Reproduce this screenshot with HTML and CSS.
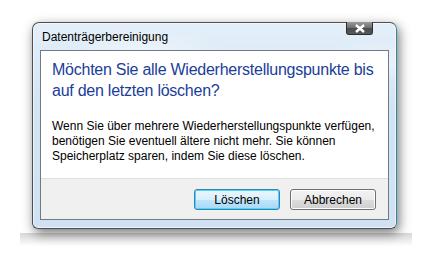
FILE: index.html
```html
<!DOCTYPE html>
<html lang="de">

<head>
    <meta charset="UTF-8">
    <link rel="stylesheet" href="styles.css">
    <title>Datenträgerbereinigung</title>
</head>

<body>
    <div class="stage">
        <div class="window">
            <div class="titlebar">
                <span class="title">Datenträgerbereinigung</span>
                <div class="close-btn">
                    <svg width="12" height="9" viewBox="0 0 12 9">
                        <path d="M2 1 L10 8 M10 1 L2 8" stroke="#ffffff" stroke-width="2.4" />
                    </svg>
                </div>
            </div>
            <div class="panel">
                <div class="content">
                    <div class="instruction">Möchten Sie alle Wiederherstellungspunkte bis auf den letzten löschen?</div>
                    <p class="message">Wenn Sie über mehrere Wiederherstellungspunkte verfügen, benötigen Sie eventuell ältere nicht mehr. Sie können Speicherplatz sparen, indem Sie diese löschen.</p>
                </div>
                <div class="footer">
                    <button class="btn btn-default">Löschen</button>
                    <button class="btn">Abbrechen</button>
                </div>
            </div>
        </div>
        <div class="floor"></div>
    </div>
</body>

</html>
```

FILE: styles.css
```css
* {
    margin: 0;
    padding: 0;
    box-sizing: border-box;
}

body {
    font-family: 'Liberation Sans', Arial, sans-serif;
    background-color: #ffffff;
    color: #000000;
    width: 433px;
    height: 253px;
    overflow: hidden;
}

.stage {
    padding: 22px 0 0 32px;
}

/* Window frame */
.window {
    position: relative;
    width: 365px;
    height: 207px;
    border: 1px solid #4a4f55;
    border-right-color: #2a8aa0;
    border-radius: 7px 7px 6px 6px;
    background:
        radial-gradient(ellipse 120px 40px at 110px 34px, rgba(255, 255, 255, 0.55), rgba(255, 255, 255, 0) 70%),
        radial-gradient(ellipse 90px 30px at 340px 40px, rgba(255, 255, 255, 0.5), rgba(255, 255, 255, 0) 70%),
        linear-gradient(180deg, #e4eff9 0%, #d3e4f4 40%, #cfe1f3 100%);
    box-shadow: 0 0 0 1px rgba(255, 255, 255, 0.6) inset, 2px 4px 12px rgba(0, 0, 0, 0.55);
    z-index: 1;
}

.titlebar {
    height: 27px;
    padding: 4px 0 0 9px;
}

.title {
    font-size: 12px;
    color: #000000;
}

.close-btn {
    position: absolute;
    top: -1px;
    right: 23px;
    width: 27px;
    height: 13px;
    border: 1px solid #2e2e2e;
    border-top: none;
    border-radius: 0 0 3px 3px;
    background: linear-gradient(180deg, #9a9a9a 0%, #6c6c6c 50%, #4a4a4a 51%, #5a5a5a 100%);
    display: flex;
    align-items: center;
    justify-content: center;
}

/* Inner panel */
.panel {
    margin: 0 7px;
    height: 170px;
    border: 1px solid #6f7a85;
    display: flex;
    flex-direction: column;
}

.content {
    flex: 1;
    background-color: #ffffff;
    padding: 8px 4px 0 11px;
}

.instruction {
    font-size: 16px;
    line-height: 21px;
    letter-spacing: -0.25px;
    color: #1b3d9a;
}

.message {
    font-size: 12px;
    line-height: 15px;
    margin-top: 18px;
}

.footer {
    height: 41px;
    background-color: #f0f0f0;
    border-top: 1px solid #dfdfdf;
    display: flex;
    justify-content: flex-end;
    align-items: flex-start;
    gap: 10px;
    padding: 10px 12px 0 0;
}

.btn {
    width: 86px;
    height: 21px;
    font-family: 'Liberation Sans', Arial, sans-serif;
    font-size: 12px;
    color: #000000;
    border: 1px solid #707070;
    border-radius: 3px;
    background: linear-gradient(180deg, #f2f2f2 0%, #ebebeb 50%, #dddddd 51%, #cfcfcf 100%);
    box-shadow: 0 0 0 1px #fcfcfc inset;
}

.btn-default {
    border-color: #3c7fb1;
    background: linear-gradient(180deg, #eaf6fd 0%, #d9f0fc 50%, #bee6fd 51%, #a7d9f5 100%);
    box-shadow: 0 0 0 1px #48d8fb inset;
}

/* Reflection strip under the window */
.floor {
    width: 392px;
    height: 14px;
    margin: 3px 0 0 -12px;
    border-top: 1px solid #ffffff;
    background: linear-gradient(180deg, rgba(0, 0, 0, 0.16) 0%, rgba(0, 0, 0, 0) 100%);
}
```
